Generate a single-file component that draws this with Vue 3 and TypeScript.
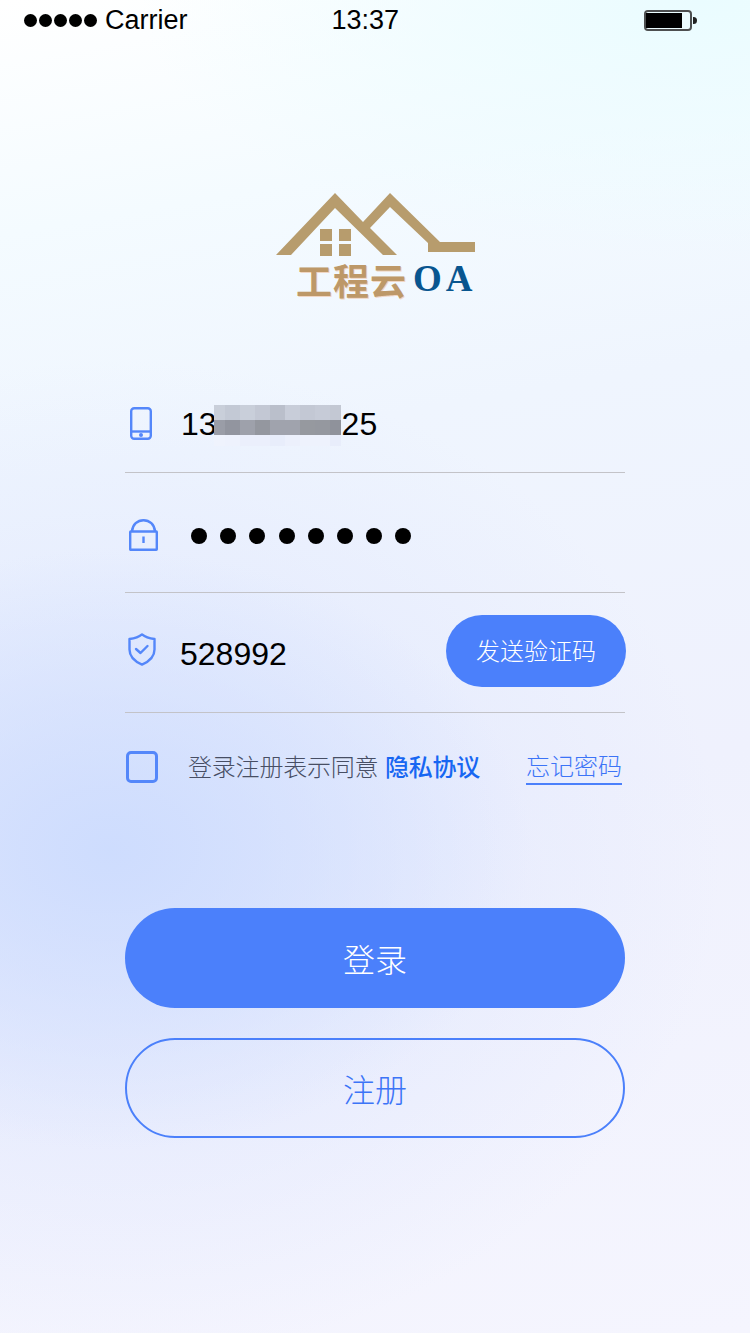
<script setup lang="ts">
const dots: number[] = [1, 2, 3, 4, 5]
const pwd: number[] = [1, 2, 3, 4, 5, 6, 7, 8]
const mosaic: string[] = [
  '#c9cfda', '#c3c9d5', '#c9cfda', '#c3c8d4', '#babfcb', '#c8cdd9', '#c3c8d4', '#c6cbd7', '#c3c8d3',
  '#9a9da7', '#92959f', '#9ea1ab', '#94979f', '#a0a3ad', '#a0a3ad', '#96999f', '#95989f', '#8f929b',
  '#eff3fd', '#eef2fd', '#ebeffc', '#ebeffc', '#e8edfb', '#ecf0fc', '#eef2fd', '#eef2fd', '#e8edfb',
]
</script>

<template>
  <div class="page">
    <header class="status">
      <div class="signal">
        <i v-for="d in dots" :key="d" class="sdot"></i>
      </div>
      <span class="carrier">Carrier</span>
      <span class="time">13:37</span>
      <div class="battery"><i class="fill"></i></div>
      <i class="nub"></i>
    </header>

    <div class="logo">
      <svg class="roof" width="200" height="64" viewBox="276 193 200 64">
        <path fill="#b79c6d" d="M276 255 335 193 363 222 390 193 440 242H475V252H428V243L390 207 370 228 397 255H383L335 208 291 255Z" />
        <path fill="#b79c6d" d="M320 229h12v12h-12zM339 229h12v12h-12zM320 244h12v12h-12zM339 244h12v12h-12z" />
      </svg>
      <div class="logo-text"><span class="cn">工程云</span><span class="oa">OA</span></div>
    </div>

    <main class="form">
      <div class="row row-phone">
        <svg class="ic" width="22" height="33" viewBox="0 0 22 33" fill="none" stroke="#5487fa" stroke-width="2.4">
          <rect x="1.200" y="1.200" width="19.600" height="30.600" rx="3" />
          <path d="M1.200 24.500h19.600" />
          <circle cx="11" cy="28" r="2" fill="#5487fa" stroke="none" />
        </svg>
        <div class="value phone">
          <span>13</span>
          <div class="mosaic">
            <i v-for="(c, idx) in mosaic" :key="idx" :style="{ background: c }"></i>
          </div>
          <span>25</span>
        </div>
      </div>

      <div class="row row-pwd">
        <svg class="ic" width="29" height="32" viewBox="0 0 29 32" fill="none" stroke="#5487fa" stroke-width="2.4">
          <rect x="1.200" y="12.500" width="26.600" height="18.300" rx="0.500" />
          <path d="M3 12.500C3.500 5.500 8.500 1.200 14.500 1.200S25.500 5.500 26 12.500" />
          <path d="M14.500 17.500v6.500" />
        </svg>
        <div class="pwd">
          <i v-for="p in pwd" :key="p" class="pdot"></i>
        </div>
      </div>

      <div class="row row-code">
        <svg class="ic" width="28" height="33" viewBox="0 0 28 33" fill="none" stroke="#5487fa" stroke-width="2.4">
          <path d="M14 1.400C17 4 21.500 5.500 26.500 6V16.500C26.500 24 20 29 14 31.600 8 29 1.500 24 1.500 16.500V6C6.500 5.500 11 4 14 1.400Z" stroke-linejoin="round" />
          <path d="M8 16l4.500 4 7-7" stroke-linecap="round" stroke-linejoin="round" />
        </svg>
        <div class="value code">528992</div>
        <button class="send">发送验证码</button>
      </div>

      <div class="agree">
        <i class="check"></i>
        <span class="agree-text">登录注册表示同意 <b>隐私协议</b></span>
        <a class="forgot">忘记密码</a>
      </div>

      <button class="btn primary">登录</button>
      <button class="btn outline">注册</button>
    </main>
  </div>
</template>

<style>
body {
  margin: 0;
}
</style>

<style scoped>
.page {
  width: 750px;
  height: 1333px;
  overflow: hidden;
  font-family: "Liberation Sans", "Noto Sans CJK SC", sans-serif;
  background:
    radial-gradient(ellipse 420px 300px at 110px 850px, rgba(205, 220, 254, 0.95) 0%, rgba(205, 220, 254, 0) 100%),
    radial-gradient(ellipse 600px 500px at 120px 860px, rgba(218, 227, 254, 0.8) 0%, rgba(218, 227, 254, 0) 100%),
    radial-gradient(ellipse 560px 260px at 700px 0px, #eafcff 0%, rgba(234, 252, 255, 0) 100%),
    linear-gradient(170deg, #ffffff 0%, #f4fbff 16%, #eff5fe 33%, #eff1fd 60%, #f5f5fe 100%);
}
.status {
  height: 40px;
  display: flex;
  align-items: center;
  padding-left: 24px;
  color: #000;
}
.signal {
  display: flex;
  gap: 2px;
}
.sdot {
  width: 13px;
  height: 13px;
  border-radius: 50%;
  background: #000;
}
.carrier {
  margin-left: 8px;
  font-size: 27px;
}
.time {
  margin-left: 144px;
  font-size: 27px;
}
.battery {
  margin-left: 245px;
  width: 48px;
  height: 21px;
  box-sizing: border-box;
  border: 2px solid #4d4f50;
  border-radius: 4px;
  padding: 1px 0 1px 0;
}
.fill {
  display: block;
  width: 36px;
  height: 100%;
  background: #000;
}
.nub {
  width: 4px;
  height: 7px;
  margin-left: 1px;
  background: #222;
  border-radius: 0 4px 4px 0;
}
.logo {
  margin-top: 153px;
  margin-left: 276px;
  width: 200px;
}
.roof {
  display: block;
}
.logo-text {
  margin-top: 2px;
  margin-left: 20px;
  display: flex;
  align-items: center;
  height: 40px;
  font-weight: 700;
  line-height: 40px;
  white-space: nowrap;
}
.cn {
  flex: none;
  font-size: 36px;
  color: #bd9868;
  letter-spacing: 1px;
  font-family: "Noto Sans CJK SC", sans-serif;
  text-shadow: 1px 1px 0 #f0d6c4;
}
.oa {
  flex: none;
  font-family: "Liberation Serif", serif;
  font-size: 37px;
  letter-spacing: 4px;
  color: #08558f;
  margin-left: 6px;
}
.form {
  margin: 54px 125px 0;
}
.row {
  display: flex;
  align-items: center;
  border-bottom: 1px solid #c3c3c8;
  box-sizing: border-box;
  height: 120px;
}
.ic {
  flex: none;
}
.value {
  color: #000;
  font-size: 32px;
}
.row-phone {
  padding-top: 24px;
}
.row-phone .ic {
  margin-left: 5px;
  margin-top: -2px;
}
.phone {
  margin-left: 29px;
  display: flex;
  align-items: center;
}
.mosaic {
  width: 127px;
  height: 41px;
  margin: 2px 1px 0 -3px;
  flex: none;
  display: grid;
  grid-template-columns: 11px repeat(7, 15px) 11px;
  grid-template-rows: 15px 15px 11px;
}
.row-pwd .ic {
  margin-left: 4px;
  margin-top: 4px;
}
.pwd {
  margin-left: 33px;
  margin-top: 6px;
  display: flex;
  gap: 13.200px;
}
.pdot {
  width: 16px;
  height: 16px;
  border-radius: 50%;
  background: #000;
}
.row-code .ic {
  margin-left: 3px;
  margin-top: -6px;
}
.code {
  margin-left: 24px;
  margin-top: 4px;
}
.send {
  margin-left: auto;
  margin-right: -1px;
  width: 180px;
  height: 72px;
  margin-top: -4px;
  border: 0;
  padding: 0 0 2px;
  border-radius: 36px;
  background: #4b80fb;
  color: #fff;
  font-size: 24px;
  font-weight: 300;
  font-family: inherit;
}
.agree {
  display: flex;
  align-items: center;
  height: 70px;
  margin-top: 19px;
  font-size: 24px;
}
.check {
  width: 32px;
  height: 32px;
  box-sizing: border-box;
  margin-left: 1px;
  border: 3px solid #5487fa;
  border-radius: 5px;
}
.agree-text {
  margin-left: 30px;
  margin-top: -4px;
  color: #474e64;
  font-weight: 300;
  letter-spacing: -0.200px;
}
.agree-text b {
  color: #1766f2;
  font-weight: 500;
}
.forgot {
  margin-left: auto;
  margin-right: 3px;
  margin-top: -2px;
  color: #3c74f7;
  font-weight: 300;
  border-bottom: 2px solid #4b80fb;
  padding-bottom: 1px;
}
.btn {
  display: block;
  width: 500px;
  height: 100px;
  border-radius: 50px;
  font-size: 32px;
  font-weight: 300;
  font-family: inherit;
  padding: 0;
}
.primary {
  margin-top: 106px;
  border: 0;
  background: #4b80fb;
  color: #fff;
}
.outline {
  margin-top: 30px;
  border: 2px solid #4b80fb;
  background: transparent;
  color: #3c74f7;
}
</style>
